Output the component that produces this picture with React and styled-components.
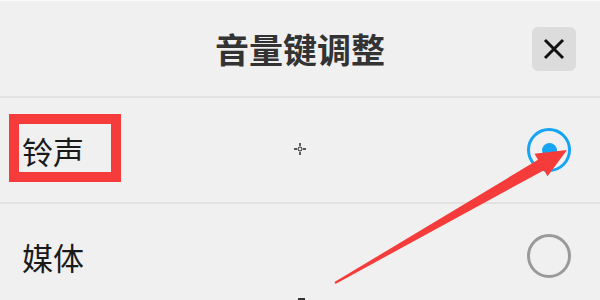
import React from 'react';
import styled, { createGlobalStyle } from 'styled-components';

const GlobalStyle = createGlobalStyle`
    html, body {
        margin: 0;
        padding: 0;
        background: #f0f0f0;
    }
    body {
        font-family: "Noto Sans CJK SC", "Noto Sans", sans-serif;
    }
`;

const OPTIONS = [
    { id: 'ring', label: '铃声', checked: true, marked: true },
    { id: 'media', label: '媒体', checked: false },
];

function App() {
    return (
        <>
            <GlobalStyle />
            <Page>
                <Header>
                    <span />
                    <Title>音量键调整</Title>
                    <CloseButton aria-label="关闭">
                        <svg width="22" height="22" viewBox="0 0 22 22">
                            <path d="M2 2 L20 20 M20 2 L2 20" stroke="#111" strokeWidth="3" fill="none" />
                        </svg>
                    </CloseButton>
                </Header>
                {OPTIONS.map((opt) => (
                    <Row key={opt.id}>
                        <Label>
                            {opt.label}
                            {opt.marked && <Highlight />}
                        </Label>
                        <Radio $checked={opt.checked} />
                    </Row>
                ))}
                {/* screenshot annotations: cursor, red arrow */}
                <Crosshair width="12" height="12" viewBox="0 0 12 12">
                    <circle cx="6" cy="6" r="2" fill="none" stroke="#222" strokeWidth="1" />
                    <path d="M6 0 V3 M6 9 V12 M0 6 H3 M9 6 H12" stroke="#222" strokeWidth="1.4" />
                </Crosshair>
                <Arrow width="600" height="300" viewBox="0 0 600 300">
                    <polygon
                        points="335.5,282.9 544,169.2 547.5,175.3 567,149 534.5,152.7 538,158.8 334.5,281.1"
                        fill="#f63b3b"
                    />
                </Arrow>
                <CursorTail />
            </Page>
        </>
    );
}

const Page = styled.div`
    position: relative;
    width: 600px;
    height: 300px;
    overflow: hidden;
    background: #f0f0f0;
    border-top: 1px solid #fafafa;
    box-sizing: border-box;
`;

const Header = styled.div`
    height: 95px;
    display: grid;
    grid-template-columns: 1fr auto 1fr;
    align-items: center;
    padding-right: 24px;
    border-bottom: 2px solid #e2e2e2;
`;

const Title = styled.h1`
    margin: 0 0 0 24px;
    font-size: 34px;
    font-weight: 700;
    color: #333;
    line-height: 1;
`;

const CloseButton = styled.button`
    justify-self: end;
    width: 44px;
    height: 44px;
    border: none;
    border-radius: 6px;
    background: #dcdcdc;
    display: flex;
    align-items: center;
    justify-content: center;
    padding: 0;
`;

const Row = styled.div`
    height: 104px;
    display: flex;
    align-items: center;
    justify-content: space-between;
    padding: 0 29px 0 22px;
    border-bottom: 2px solid #e2e2e2;
`;

const Label = styled.span`
    position: relative;
    font-size: 31px;
    color: #1a1a1a;
    line-height: 1;
`;

const Highlight = styled.span`
    position: absolute;
    left: -13px;
    top: -21px;
    width: 92px;
    height: 48px;
    border: 10px solid #f63b3b;
`;

const Radio = styled.span`
    box-sizing: border-box;
    width: 44px;
    height: 44px;
    border-radius: 50%;
    border: 3px solid ${(p) => (p.$checked ? '#16a4f4' : '#9a9a9a')};
    display: flex;
    align-items: center;
    justify-content: center;

    &::after {
        content: '';
        display: ${(p) => (p.$checked ? 'block' : 'none')};
        width: 15px;
        height: 15px;
        border-radius: 50%;
        background: #16a4f4;
    }
`;

const Crosshair = styled.svg`
    position: absolute;
    left: 294px;
    top: 142px;
`;

const Arrow = styled.svg`
    position: absolute;
    left: 0;
    top: 0;
    pointer-events: none;
`;

const CursorTail = styled.span`
    position: absolute;
    left: 298px;
    top: 297px;
    width: 7px;
    height: 3px;
    background: #333;
`;

export default App;
